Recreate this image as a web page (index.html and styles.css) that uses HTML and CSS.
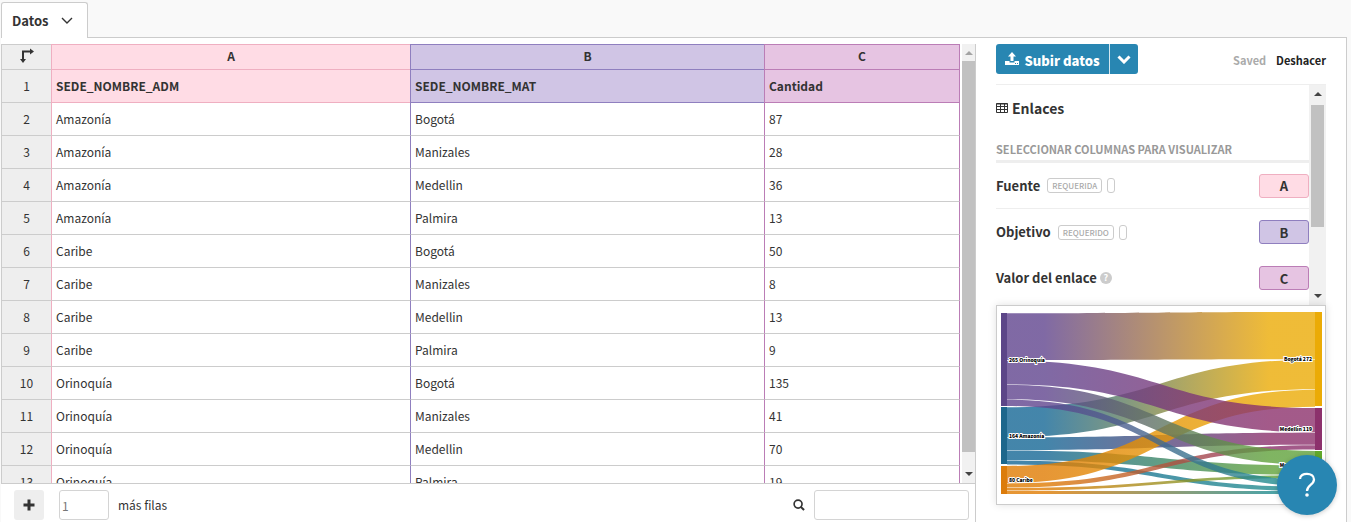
FILE: index.html
```html
<!DOCTYPE html>
<html lang="es">
<head>
<meta charset="utf-8">
<title>Datos</title>
<link rel="stylesheet" href="styles.css">
</head>
<body>
<div class="app">
  <nav class="tabs">
    <button class="tab" type="button">Datos
      <svg class="tab-arrow" viewBox="0 0 12 8" aria-hidden="true"><path d="M1 1l5 5 5-5" fill="none" stroke="currentColor" stroke-width="1.4"/></svg>
    </button>
  </nav>
  <main class="workspace">
    <section class="editor">
      <div class="grid-area">
        <div class="grid-clip">
          <table class="grid">
            <colgroup><col class="w-num"><col><col class="w-b"><col class="w-c"></colgroup>
            <thead>
              <tr><th class="num corner"><svg class="transpose" viewBox="0 0 16 16" aria-hidden="true"><path d="M4 12V3.500H12" fill="none" stroke="currentColor" stroke-width="2"/><path d="M1 11h6l-3 4zM11 .5v6l4-3z" fill="currentColor"/></svg></th><th class="a">A</th><th class="b">B</th><th class="c">C</th></tr>
            </thead>
            <tbody>
              <tr class="names"><th class="num">1</th><td class="a">SEDE_NOMBRE_ADM</td><td class="b">SEDE_NOMBRE_MAT</td><td class="c">Cantidad</td></tr>
              <tr><th class="num">2</th><td class="a">Amazonía</td><td class="b">Bogotá</td><td class="c">87</td></tr>
              <tr><th class="num">3</th><td class="a">Amazonía</td><td class="b">Manizales</td><td class="c">28</td></tr>
              <tr><th class="num">4</th><td class="a">Amazonía</td><td class="b">Medellin</td><td class="c">36</td></tr>
              <tr><th class="num">5</th><td class="a">Amazonía</td><td class="b">Palmira</td><td class="c">13</td></tr>
              <tr><th class="num">6</th><td class="a">Caribe</td><td class="b">Bogotá</td><td class="c">50</td></tr>
              <tr><th class="num">7</th><td class="a">Caribe</td><td class="b">Manizales</td><td class="c">8</td></tr>
              <tr><th class="num">8</th><td class="a">Caribe</td><td class="b">Medellin</td><td class="c">13</td></tr>
              <tr><th class="num">9</th><td class="a">Caribe</td><td class="b">Palmira</td><td class="c">9</td></tr>
              <tr><th class="num">10</th><td class="a">Orinoquía</td><td class="b">Bogotá</td><td class="c">135</td></tr>
              <tr><th class="num">11</th><td class="a">Orinoquía</td><td class="b">Manizales</td><td class="c">41</td></tr>
              <tr><th class="num">12</th><td class="a">Orinoquía</td><td class="b">Medellin</td><td class="c">70</td></tr>
              <tr><th class="num">13</th><td class="a">Orinoquía</td><td class="b">Palmira</td><td class="c">19</td></tr>
            </tbody>
          </table>
        </div>
        <div class="scroll scroll-grid" aria-hidden="true"><i class="up"></i><i class="thumb"></i><i class="down"></i></div>
      </div>
      <form class="foot">
        <button class="add" type="button" aria-label="Añadir filas"><svg viewBox="0 0 12 12"><path d="M6 .5v11M.5 6h11" stroke="currentColor" stroke-width="3"/></svg></button>
        <input class="rows" id="rows" type="text" value="1">
        <label class="rows-label" for="rows">más filas</label>
        <label class="find-label" for="find" aria-label="Buscar"><svg viewBox="0 0 13 13"><circle cx="5.500" cy="5.500" r="4.300" fill="none" stroke="currentColor" stroke-width="1.800"/><path d="M8.500 8.500L12 12" stroke="currentColor" stroke-width="2.200"/></svg></label>
        <input class="find" id="find" type="text">
      </form>
    </section>
    <aside class="side">
      <div class="actions">
        <button class="upload" type="button"><svg viewBox="0 0 14 14" aria-hidden="true"><path d="M7 0l4 4.500H8.500V9h-3V4.500H3z" fill="currentColor"/><path d="M0 9h4.500v1.500h5V9H14v4H0z" fill="currentColor"/><path d="M10 11.500h1M12 11.500h1" stroke="#2886b2"/></svg>Subir datos</button>
        <button class="upload-more" type="button" aria-label="Más opciones"><svg viewBox="0 0 14 9" aria-hidden="true"><path d="M1.500 1.500L7 7l5.500-5.500" fill="none" stroke="currentColor" stroke-width="3"/></svg></button>
        <span class="saved">Saved</span>
        <button class="undo" type="button">Deshacer</button>
      </div>
      <div class="bindings">
        <div class="binding-list">
          <h2 class="title"><svg viewBox="0 0 12 10" aria-hidden="true"><path d="M.5.500h11v9H.5zM.5 1h11M.5 3.500h11M.5 6.500h11M4.500 1v8.500M8.500 1v8.500" fill="none" stroke="currentColor"/></svg>Enlaces</h2>
          <h3 class="subtitle">SELECCIONAR COLUMNAS PARA VISUALIZAR</h3>
          <div class="binding ruled"><label for="fa">Fuente</label><span class="tag">REQUERIDA</span><span class="tag empty"></span><input class="chip a" id="fa" type="text" value="A"></div>
          <div class="binding"><label for="fb">Objetivo</label><span class="tag">REQUERIDO</span><span class="tag empty"></span><input class="chip b" id="fb" type="text" value="B"></div>
          <div class="binding"><label for="fc">Valor del enlace</label><span class="hint">?</span><input class="chip c" id="fc" type="text" value="C"></div>
        </div>
        <div class="scroll scroll-side" aria-hidden="true"><i class="up"></i><i class="thumb"></i><i class="down"></i></div>
      </div>
      <div class="preview">
        <svg class="sankey" viewBox="997 306 328 198" role="img" aria-label="Diagrama de Sankey">
          <defs>
            <linearGradient id="po" gradientUnits="userSpaceOnUse" x1="1007" x2="1315" y1="0" y2="0"><stop offset=".12" stop-color="#60448e"/><stop offset=".85" stop-color="#ebab06"/></linearGradient>
            <linearGradient id="pm" gradientUnits="userSpaceOnUse" x1="1007" x2="1315" y1="0" y2="0"><stop offset=".12" stop-color="#60448e"/><stop offset=".85" stop-color="#8c316c"/></linearGradient>
            <linearGradient id="pg" gradientUnits="userSpaceOnUse" x1="1007" x2="1315" y1="0" y2="0"><stop offset=".12" stop-color="#60448e"/><stop offset=".85" stop-color="#60a23b"/></linearGradient>
            <linearGradient id="pt" gradientUnits="userSpaceOnUse" x1="1007" x2="1315" y1="0" y2="0"><stop offset=".12" stop-color="#60448e"/><stop offset=".85" stop-color="#238c8f"/></linearGradient>
            <linearGradient id="bo" gradientUnits="userSpaceOnUse" x1="1007" x2="1315" y1="0" y2="0"><stop offset=".12" stop-color="#156795"/><stop offset=".85" stop-color="#ebab06"/></linearGradient>
            <linearGradient id="bm" gradientUnits="userSpaceOnUse" x1="1007" x2="1315" y1="0" y2="0"><stop offset=".12" stop-color="#156795"/><stop offset=".85" stop-color="#8c316c"/></linearGradient>
            <linearGradient id="bg" gradientUnits="userSpaceOnUse" x1="1007" x2="1315" y1="0" y2="0"><stop offset=".12" stop-color="#156795"/><stop offset=".85" stop-color="#60a23b"/></linearGradient>
            <linearGradient id="bt" gradientUnits="userSpaceOnUse" x1="1007" x2="1315" y1="0" y2="0"><stop offset=".12" stop-color="#156795"/><stop offset=".85" stop-color="#238c8f"/></linearGradient>
            <linearGradient id="oo" gradientUnits="userSpaceOnUse" x1="1007" x2="1315" y1="0" y2="0"><stop offset=".12" stop-color="#e07c03"/><stop offset=".85" stop-color="#ebab06"/></linearGradient>
            <linearGradient id="om" gradientUnits="userSpaceOnUse" x1="1007" x2="1315" y1="0" y2="0"><stop offset=".12" stop-color="#e07c03"/><stop offset=".85" stop-color="#8c316c"/></linearGradient>
            <linearGradient id="og" gradientUnits="userSpaceOnUse" x1="1007" x2="1315" y1="0" y2="0"><stop offset=".12" stop-color="#e07c03"/><stop offset=".85" stop-color="#60a23b"/></linearGradient>
            <linearGradient id="ot" gradientUnits="userSpaceOnUse" x1="1007" x2="1315" y1="0" y2="0"><stop offset=".12" stop-color="#e07c03"/><stop offset=".85" stop-color="#238c8f"/></linearGradient>
          </defs>
          <g class="links">
            <path fill="url(#bo)" d="M1007 407.300C1161 407.300 1161 359.700 1315 359.700V389.300C1161 389.300 1161 437 1007 437z"/>
            <path fill="url(#bm)" d="M1007 437.500C1161 437.500 1161 432.700 1315 432.700V444.800C1161 444.800 1161 450 1007 450z"/>
            <path fill="url(#bg)" d="M1007 450.500C1161 450.500 1161 465.500 1315 465.500V475C1161 475 1161 460 1007 460z"/>
            <path fill="url(#bt)" d="M1007 460.400C1161 460.400 1161 486.800 1315 486.800V491C1161 491 1161 464.500 1007 464.500z"/>
            <path fill="url(#oo)" d="M1007 466C1161 466 1161 389.700 1315 389.700V406.800C1161 406.800 1161 483 1007 483z"/>
            <path fill="url(#om)" d="M1007 483.400C1161 483.400 1161 445.200 1315 445.200V449.500C1161 449.500 1161 487.500 1007 487.500z"/>
            <path fill="url(#og)" d="M1007 488C1161 488 1161 475.200 1315 475.200V477.800C1161 477.800 1161 490.500 1007 490.500z"/>
            <path fill="url(#ot)" d="M1007 491H1315V494H1007z"/>
            <path fill="url(#po)" d="M1007 313.300C1161 313.300 1161 312 1315 312V359.200C1161 359.200 1161 360 1007 360z"/>
            <path fill="url(#pm)" d="M1007 360.700C1161 360.700 1161 408 1315 408V432.200C1161 432.200 1161 384.500 1007 384.500z"/>
            <path fill="url(#pg)" d="M1007 385C1161 385 1161 451 1315 451V465C1161 465 1161 399.200 1007 399.200z"/>
            <path fill="url(#pt)" d="M1007 399.600C1161 399.600 1161 480 1315 480V486.400C1161 486.400 1161 406 1007 406z"/>
          </g>
          <path fill="#5c4688" d="M1001 313h6v93h-6z"/><path fill="#1d678c" d="M1001 407h6v57h-6z"/><path fill="#dc7c0b" d="M1001 466h6v28h-6z"/>
          <path fill="#ebab06" d="M1315 312h7v94h-7z"/><path fill="#8c316c" d="M1315 408h7v42h-7z"/><path fill="#60a82b" d="M1315 451h7v27h-7z"/><path fill="#238c8f" d="M1315 480h7v14h-7z"/>
          <g class="node-labels">
            <text x="1009" y="362">265 Orinoquía</text><text x="1009" y="438">164 Amazonía</text><text x="1009" y="482">80 Caribe</text>
            <g text-anchor="end"><text x="1312" y="361">Bogotá 272</text><text x="1312" y="431">Medellin 119</text><text x="1312" y="467">Manizales 77</text></g>
          </g>
        </svg>
      </div>
    </aside>
  </main>
</div>
<button class="help" type="button" aria-label="Ayuda"><svg viewBox="0 0 60 60" aria-hidden="true"><path d="M23 24C23 17 37 17 37 24.500C37 30 30 30 30 36" fill="none" stroke="#fff" stroke-width="2.300"/><circle cx="30" cy="40" r="1.800" fill="#fff"/></svg></button>
</body>
</html>
```
FILE: styles.css
```css
* { box-sizing: border-box; }
html, body { height: 100%; }
body {
  margin: 0;
  background: #f9f9f9;
  color: #333;
  font: 12px/20px "Noto Sans CJK SC", "Noto Sans", sans-serif;
  overflow: hidden;
}
button, input { font: inherit; color: inherit; margin: 0; }
button { border: 0; padding: 0; background: none; cursor: pointer; }
svg { display: block; }

.app { height: 100vh; display: flex; flex-direction: column; padding: 2px 4px 0 1px; }
.tabs { display: flex; flex: none; position: relative; z-index: 1; }
.tab {
  display: flex;
  align-items: center;
  gap: 13px;
  height: 36px;
  margin-bottom: -1px;
  padding: 0 14px 0 10px;
  background: #fff;
  border: 1px solid #ccc;
  border-bottom: 0;
  border-radius: 3px 3px 0 0;
  font-size: 13px;
  font-weight: 700;
}
.tab-arrow { width: 12px; height: 8px; }
.workspace {
  flex: 1;
  min-height: 0;
  display: flex;
  gap: 20px;
  padding: 6px 20px 0 0;
  background: #fff;
  border: 1px solid #ccc;
  border-width: 1px 1px 0 0;
}

.editor { flex: 1; min-width: 0; display: flex; flex-direction: column; border: 1px solid #ccc; border-width: 0 1px 0 0; }
.grid-area { flex: 1; min-height: 0; display: flex; gap: 2px; border-bottom: 1px solid #ccc; }
.grid-clip { flex: 1; min-width: 0; overflow: hidden; }
.grid { width: 100%; table-layout: fixed; border-spacing: 0; }
.w-num { width: 50px; }
.w-b { width: 354px; }
.w-c { width: 196px; }
.grid th, .grid td {
  height: 33px;
  padding: 0 4px;
  border: 0 solid #ccc;
  border-width: 0 0 1px 1px;
  text-align: left;
}
.grid thead th { height: 26px; padding-bottom: 2px; border-top-width: 1px; text-align: center; font-weight: 700; line-height: 20px; }
.grid .num { background: #eee; text-align: center; font-weight: 400; }
.grid td.a { border-left-color: #efafc1; }
.grid td.b { border-left-color: #8f7fbf; }
.grid td.c { border-left-color: #bb7db6; border-right: 1px solid #bb7db6; }
.grid thead .a, .grid .names .a, .chip.a { background: #ffdce5; border-color: #efafc1; }
.grid thead .b, .grid .names .b, .chip.b { background: #d0c5e5; border-color: #8f7fbf; }
.grid thead .c, .grid .names .c, .chip.c { background: #e6c4e2; border-color: #bb7db6; }
.grid thead .c { border-right-width: 1px; }
.grid .names td { font-weight: 700; }
.transpose { width: 16px; height: 16px; margin: 0 auto; }

.scroll { display: flex; flex-direction: column; align-items: center; flex: none; background: #f1f1f1; }
.scroll .up, .scroll .down { width: 0; height: 0; border: 4px solid transparent; }
.scroll .up { border-top: 0; border-bottom-color: #444; }
.scroll .down { border-bottom: 0; border-top-color: #444; margin-top: auto; }
.scroll .thumb { width: 13px; background: #c1c1c1; }
.scroll-grid { width: 13px; padding: 7px 0; }
.scroll-grid .up { border-bottom-color: #a3a3a3; }
.scroll-grid .thumb { flex: 1; margin: 6px 0 20px; }
.scroll-side { width: 17px; padding: 7px 0 7px; }
.scroll-side .thumb { height: 122px; margin-top: 9px; }

.foot { display: flex; align-items: center; flex: none; height: 38px; padding: 4px 6px 0 13px; }
.add { display: grid; place-items: center; width: 30px; height: 30px; background: #eee; border-radius: 3px; }
.add svg { width: 12px; height: 12px; }
.rows, .find { height: 30px; background: #fff; border: 1px solid #d4d4d4; border-radius: 3px; padding: 0 2px; }
.rows { width: 50px; margin: 0 9px 0 15px; color: #777; }
.find { width: 155px; }
.find-label { margin: 0 9px 0 auto; }
.find-label svg { width: 12px; height: 12px; }

.side { width: 330px; flex: none; display: flex; flex-direction: column; }
.actions { display: flex; align-items: stretch; height: 30px; margin-bottom: 10px; }
.upload, .upload-more { display: flex; align-items: center; justify-content: center; background: #2886b2; color: #fff; }
.upload { width: 113px; gap: 5px; border-radius: 3px 0 0 3px; font-size: 13px; font-weight: 900; padding-top: 3px; }
.upload svg { width: 14px; height: 14px; margin-bottom: 3px; }
.upload-more { width: 29px; border-left: 1px solid #d4e7f0; border-radius: 0 3px 3px 0; }
.upload-more svg { width: 14px; height: 9px; }
.saved, .undo { align-self: center; padding-top: 1px; font-size: 11px; font-weight: 700; }
.saved { margin: 0 10px 0 auto; color: #aaa; }
.undo { color: #222; }

.bindings { display: flex; flex: none; height: 221px; border-top: 1px solid #eee; }
.binding-list { flex: 1; min-width: 0; }
.title { display: flex; align-items: center; gap: 4px; margin: 13px 0 21px; font-size: 14px; line-height: 20px; font-weight: 700; }
.title svg { width: 12px; height: 10px; }
.subtitle { margin: 0; padding-bottom: 1px; border-bottom: 3px solid #eee; color: #999; font-size: 11px; line-height: 20px; font-weight: 700; }
.binding { display: flex; align-items: center; height: 46px; }
.binding label { font-size: 13px; font-weight: 700; }
.ruled { border-bottom: 1px solid #eee; }
.tag { height: 15px; min-width: 8px; padding: 0 4px; border: 1px solid #ccc; border-radius: 3px; margin-left: 7px; color: #aaa; font-size: 8px; line-height: 13px; font-weight: 500; }
.tag.empty { padding: 0; margin-left: 5px; }
.hint { width: 12px; height: 12px; margin-left: 3px; border-radius: 50%; background: #ccc; color: #fff; font-size: 9px; line-height: 12px; font-weight: 700; text-align: center; }
.chip { width: 50px; height: 24px; margin-left: auto; padding: 0; border: 1px solid; border-radius: 3px; text-align: center; font-size: 13px; font-weight: 700; }

.preview { position: relative; flex: none; background: #fff; border: 1px solid #ccc; box-shadow: 0 0 8px rgba(0, 0, 0, .12); }
.sankey { width: 100%; height: auto; }
.links { fill-opacity: .8; }
.node-labels { font-size: 5px; font-weight: 900; fill: #000; stroke: #fff; stroke-width: 2px; paint-order: stroke; }

.help { position: fixed; right: 14px; bottom: 7px; width: 60px; height: 60px; border-radius: 50%; background: #2886b2; box-shadow: 0 1px 5px rgba(0, 0, 0, .2); }
```
